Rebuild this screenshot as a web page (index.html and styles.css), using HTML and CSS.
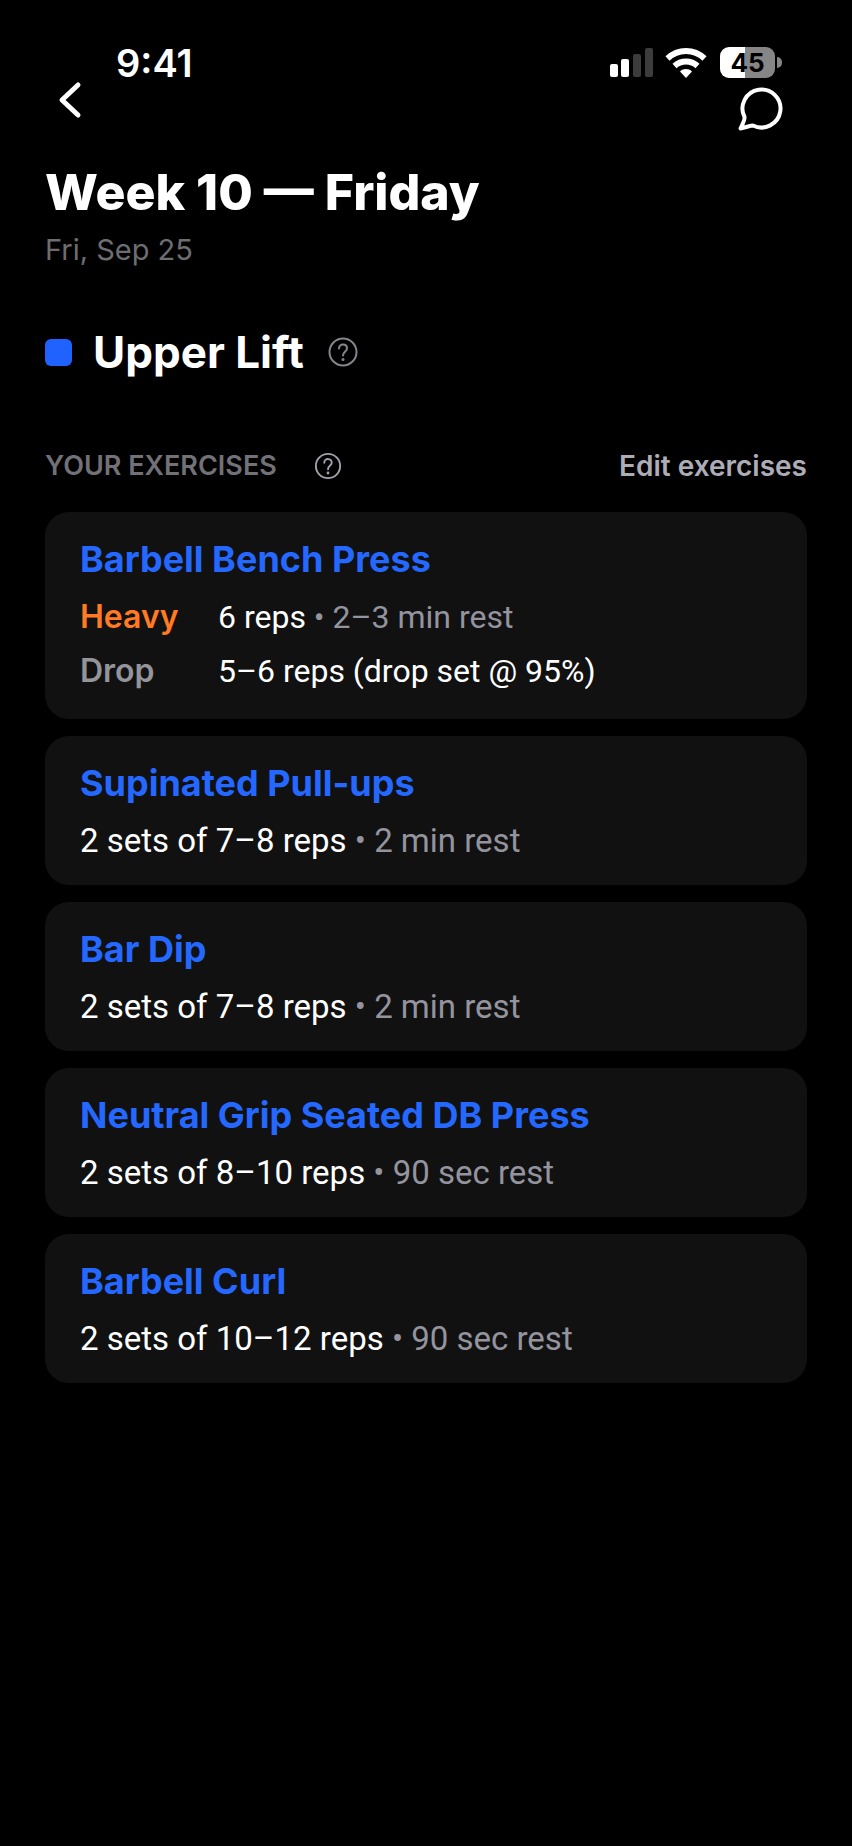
FILE: index.html
```html
<!DOCTYPE html>
<html lang="en">
<head>
<meta charset="utf-8">
<meta name="viewport" content="width=device-width, initial-scale=1">
<title>Week 10 — Friday</title>
<link rel="stylesheet" href="styles.css">
</head>
<body>

<header>
	<div class="status-bar">
		<span class="time">9:41</span>
		<div class="status-icons">
			<svg class="signal" width="44" height="32" viewBox="0 0 44 32">
				<rect x="0" y="17" width="8" height="13" rx="2" fill="#fff"/>
				<rect x="11" y="12" width="8" height="18" rx="2" fill="#fff"/>
				<rect x="23" y="7" width="8" height="23" rx="2" fill="#3c3c3d"/>
				<rect x="35" y="1" width="8" height="29" rx="2" fill="#3c3c3d"/>
			</svg>
			<svg class="wifi" width="42" height="32" viewBox="0 0 42 32" fill="none" stroke="#fff">
				<path d="M2.5 11.5C13 1.500 29 1.500 39.500 11.500" stroke-width="6"/>
				<path d="M9.500 19C16 13 26 13 32.500 19" stroke-width="6"/>
				<path d="M15 24.500C18.500 21.300 23.500 21.300 27 24.500L21 31Z" fill="#fff" stroke="none"/>
			</svg>
			<div class="battery"><span class="level">45</span></div>
		</div>
	</div>
	<nav>
		<button class="icon-btn" aria-label="Back">
			<svg width="24" height="40" viewBox="0 0 24 40" fill="none" stroke="#fff" stroke-width="5" stroke-linecap="round" stroke-linejoin="round"><path d="M20 5L4 20L20 35"/></svg>
		</button>
		<button class="icon-btn chat" aria-label="Chat">
			<svg width="46" height="46" viewBox="0 0 46 46" fill="none" stroke="#fff" stroke-width="4" stroke-linejoin="round"><path d="M7.500 31A19 19 0 1 1 16 39.500C13 39.500 9 41.500 3.500 42.500C5.500 38 8 34 7.500 31Z"/></svg>
		</button>
	</nav>
</header>

<main>
	<h1>Week 10 — Friday</h1>
	<p class="date">Fri, Sep 25</p>

	<div class="workout">
		<span class="swatch"></span>
		<h2>Upper Lift</h2>
		<button class="icon-btn help" aria-label="About this workout">
			<svg width="30" height="30" viewBox="0 0 30 30" fill="none" stroke="#85858d" stroke-width="2" stroke-linecap="round"><circle cx="15" cy="15" r="13.500"/><path d="M11 11.500C11 6 19 6.500 19 11.500C19 14.500 15 14.500 15 18.500"/><circle cx="15" cy="22.500" r="1.500" fill="#85858d" stroke="none"/></svg>
		</button>
	</div>

	<div class="section-head">
		<h3>YOUR EXERCISES</h3>
		<button class="icon-btn help" aria-label="About your exercises">
			<svg width="28" height="28" viewBox="0 0 30 30" fill="none" stroke="#a3a3ad" stroke-width="2" stroke-linecap="round"><circle cx="15" cy="15" r="13"/><path d="M11 11.500C11 6 19 6.500 19 11.500C19 14.500 15 14.500 15 18.500"/><circle cx="15" cy="22.500" r="1.500" fill="#a3a3ad" stroke="none"/></svg>
		</button>
		<a class="edit" href="#">Edit exercises</a>
	</div>

	<ul class="exercises">
		<li class="card">
			<h4>Barbell Bench Press</h4>
			<dl>
				<dt class="heavy">Heavy</dt>
				<dd>6 reps <span class="rest">• 2–3 min rest</span></dd>
				<dt>Drop</dt>
				<dd>5–6 reps (drop set @ 95%)</dd>
			</dl>
		</li>
		<li class="card">
			<h4>Supinated Pull-ups</h4>
			<p>2 sets of 7–8 reps <span class="rest">• 2 min rest</span></p>
		</li>
		<li class="card">
			<h4>Bar Dip</h4>
			<p>2 sets of 7–8 reps <span class="rest">• 2 min rest</span></p>
		</li>
		<li class="card">
			<h4>Neutral Grip Seated DB Press</h4>
			<p>2 sets of 8–10 reps <span class="rest">• 90 sec rest</span></p>
		</li>
		<li class="card">
			<h4>Barbell Curl</h4>
			<p>2 sets of 10–12 reps <span class="rest">• 90 sec rest</span></p>
		</li>
	</ul>
</main>

</body>
</html>
```
FILE: styles.css
```css
* {box-sizing: border-box;}
body {margin: 0; background-color: #000; color: #fff; font-family: Roboto, "Liberation Sans", sans-serif;}
h1, h2, h3, h4, p, ul, dl, dd {margin: 0; padding: 0;}
h1, h2, h3, h4, dt, .date, .edit, .time, .level {font-family: Inter, Roboto, sans-serif;}
ul {list-style: none;}
svg {display: block;}

.icon-btn {padding: 0; border: 0; background: none; cursor: pointer;}

/* status bar and navigation */
.status-bar {display: flex; justify-content: space-between; align-items: center; height: 80px; padding: 45px 71px 0 116px;}
.time {font-size: 38px; font-weight: 600; line-height: 40px;}
.status-icons {display: flex; align-items: center; gap: 11px;}
.battery {position: relative; display: flex; align-items: center; justify-content: center; width: 55px; height: 31px; margin: 0 6px 0 2px; border-radius: 9px; background: linear-gradient(to right, #fff 46%, #868686 46%);}
.battery::after {content: ""; position: absolute; right: -7px; top: 10px; width: 5px; height: 11px; border-radius: 0 5px 5px 0; background-color: #868686;}
.level {font-size: 26px; font-weight: 700; line-height: 31px; color: #000;}
nav {display: flex; justify-content: space-between; padding: 0 69px 0 58px; height: 52px;}
nav .icon-btn {align-self: flex-start;}
nav .chat {align-self: flex-end;}

main {padding: 30px 45px 48px;}
h1 {font-size: 50px; font-weight: 800; line-height: 60px;}
.date {margin-top: 10px; font-size: 29px; line-height: 36px; color: #6d6d72;}

.workout {display: flex; align-items: center; margin-top: 60px;}
.swatch {width: 27px; height: 27px; border-radius: 6px; background-color: #1f62ff;}
h2 {margin: 0 24px 0 21px; font-size: 44px; font-weight: 700; line-height: 48px;}

.section-head {display: flex; align-items: center; margin-top: 74px;}
h3 {margin-right: 37px; font-size: 27px; font-weight: 600; line-height: 32px; color: #717177;}
.edit {margin-left: auto; font-size: 28px; font-weight: 600; line-height: 32px; color: #adadb8; text-decoration: none;}

/* exercise cards */
.exercises {display: grid; gap: 17px; margin-top: 30px;}
.card {padding: 25px 35px 24px; border-radius: 24px; background-color: #111;}
h4 {margin-bottom: 16px; font-size: 36px; font-weight: 700; line-height: 44px; color: #2468ff;}
.card p {font-size: 33px; line-height: 40px;}
dl {display: grid; grid-template-columns: 138px 1fr; row-gap: 14px; padding-bottom: 4px; font-size: 32px; line-height: 40px;}
dt {font-size: 32px; font-weight: 600; color: #94949b;}
.heavy {color: #ff7a22;}
.rest {color: #94949f;}
```
